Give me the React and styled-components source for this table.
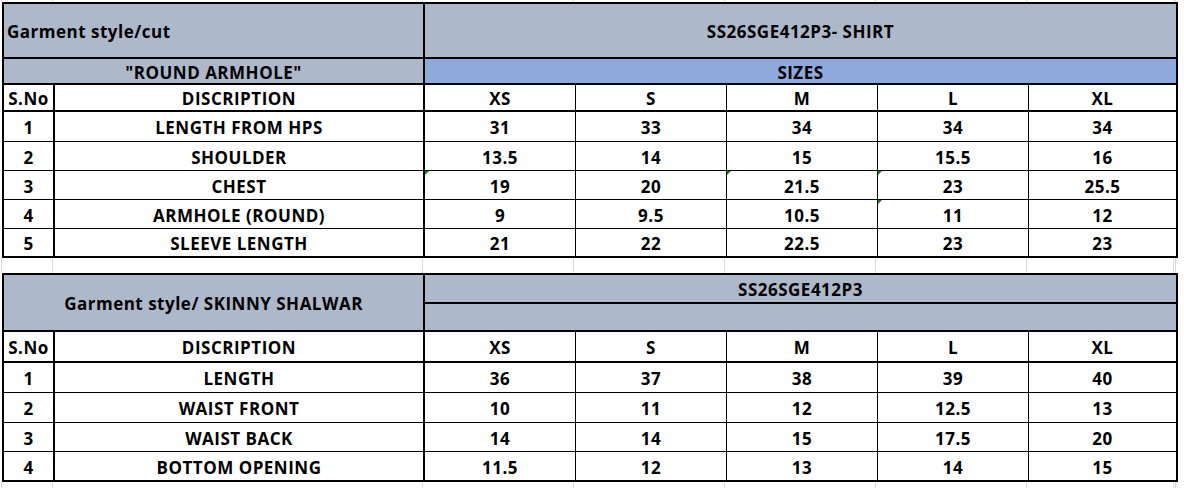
import React from "react";
import styled, { createGlobalStyle } from "styled-components";

const GlobalStyle = createGlobalStyle`
  html, body { margin: 0; padding: 0; background: #ffffff; }
  body { font-family: "Open Sans", "Noto Sans", "Liberation Sans", sans-serif; color: #000; }
  * { box-sizing: border-box; }
`;

const COLS = "51px 370px 151px 151px 151px 151px 147px";
const GRAY = "#adb9ca";
const BLUE = "#8ea9db";

const Page = styled.div`
  width: 1184px;
  height: 488px;
  overflow: hidden;
  display: flex;
  flex-direction: column;
`;

const Strip = styled.div`
  display: grid;
  grid-template-columns: 2px ${COLS} 2px;
  height: ${(p) => p.$h}px;
`;

const StripCell = styled.div`
  border-right: 1px solid #dadada;
`;

const Sheet = styled.div`
  margin-left: 2px;
  width: 1176px;
  display: grid;
  grid-template-columns: ${COLS};
  grid-template-rows: ${(p) => p.$rows};
  border: 2px solid #000;
`;

const Cell = styled.div`
  position: relative;
  display: flex;
  align-items: center;
  justify-content: ${(p) => (p.$left ? "flex-start" : "center")};
  padding: ${(p) => (p.$left ? "2px 0 0 3px" : "2px 0 0 0")};
  grid-column: span ${(p) => p.$span || 1};
  grid-row: span ${(p) => p.$rspan || 1};
  background: ${(p) => p.$bg || "#ffffff"};
  border-right: ${(p) => p.$r ?? 1}px solid #000;
  border-bottom: ${(p) => p.$b ?? 1}px solid #000;
  font-size: 17px;
  letter-spacing: 0.5px;
  font-weight: 700;
  white-space: nowrap;
  line-height: 1;
`;

const ErrorMark = styled.span`
  position: absolute;
  top: 0;
  left: 0;
  width: 0;
  height: 0;
  border-top: 4px solid #1b7a1b;
  border-right: 4px solid transparent;
`;

const SIZES = ["XS", "S", "M", "L", "XL"];

const shirt = [
  ["1", "LENGTH FROM HPS", ["31", "33", "34", "34", "34"]],
  ["2", "SHOULDER", ["13.5", "14", "15", "15.5", "16"]],
  ["3", "CHEST", ["19", "20", "21.5", "23", "25.5"], [0, 2, 3]],
  ["4", "ARMHOLE (ROUND)", ["9", "9.5", "10.5", "11", "12"], [3]],
  ["5", "SLEEVE LENGTH", ["21", "22", "22.5", "23", "23"]],
];

const shalwar = [
  ["1", "LENGTH", ["36", "37", "38", "39", "40"]],
  ["2", "WAIST FRONT", ["10", "11", "12", "12.5", "13"]],
  ["3", "WAIST BACK", ["14", "14", "15", "17.5", "20"]],
  ["4", "BOTTOM OPENING", ["11.5", "12", "13", "14", "15"]],
];

function GridStrip({ h }) {
  return (
    <Strip $h={h}>
      {Array.from({ length: 9 }).map((_, i) => (
        <StripCell key={i} />
      ))}
    </Strip>
  );
}

function HeaderRow({ b = 2 }) {
  return (
    <>
      <Cell $r={2} $b={b}>S.No</Cell>
      <Cell $r={2} $b={b}>DISCRIPTION</Cell>
      {SIZES.map((s, i) => (
        <Cell key={s} $r={i === 4 ? 0 : 1} $b={b}>
          {s}
        </Cell>
      ))}
    </>
  );
}

function DataRows({ rows }) {
  return rows.map(([n, d, vals, marks = []], ri) => {
    const b = ri === rows.length - 1 ? 0 : 1;
    return (
      <React.Fragment key={n}>
        <Cell $r={2} $b={b}>{n}</Cell>
        <Cell $r={2} $b={b}>{d}</Cell>
        {vals.map((v, i) => (
          <Cell key={i} $r={i === 4 ? 0 : 1} $b={b}>
            {marks.includes(i) && <ErrorMark />}
            {v}
          </Cell>
        ))}
      </React.Fragment>
    );
  });
}

export default function App() {
  return (
    <Page>
      <GlobalStyle />
      <GridStrip h={2} />
      <Sheet $rows="55px 26px 27px 30px 29px 29px 29px 27px">
        <Cell $span={2} $r={2} $b={2} $bg={GRAY} $left>
          Garment style/cut
        </Cell>
        <Cell $span={5} $r={0} $b={2} $bg={GRAY}>
          SS26SGE412P3- SHIRT
        </Cell>
        <Cell $span={2} $r={2} $b={2} $bg={GRAY}>
          "ROUND ARMHOLE"
        </Cell>
        <Cell $span={5} $r={0} $b={2} $bg={BLUE}>
          SIZES
        </Cell>
        <HeaderRow />
        <DataRows rows={shirt} />
      </Sheet>
      <GridStrip h={15} />
      <Sheet $rows="29px 28px 31px 30px 30px 29px 28px">
        <Cell $span={2} $rspan={2} $r={2} $b={2} $bg={GRAY}>
          Garment style/ SKINNY SHALWAR
        </Cell>
        <Cell $span={5} $r={0} $b={2} $bg={GRAY}>
          SS26SGE412P3
        </Cell>
        <Cell $span={5} $r={0} $b={2} $bg={GRAY} />
        <HeaderRow />
        <DataRows rows={shalwar} />
      </Sheet>
      <GridStrip h={6} />
    </Page>
  );
}
